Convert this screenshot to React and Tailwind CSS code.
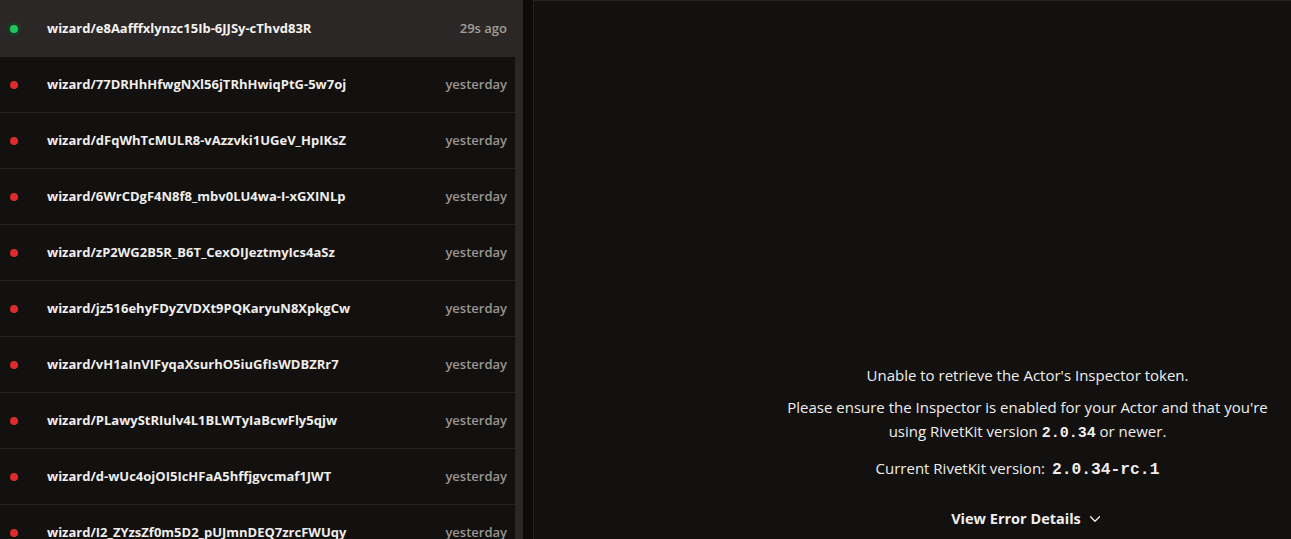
import { ChevronDown } from 'lucide-react'

const actors = [
  ['77DRHhHfwgNXl56jTRhHwiqPtG-5w7oj', 'yesterday'],
  ['dFqWhTcMULR8-vAzzvki1UGeV_HpIKsZ', 'yesterday'],
  ['6WrCDgF4N8f8_mbv0LU4wa-I-xGXINLp', 'yesterday'],
  ['zP2WG2B5R_B6T_CexOIJeztmyIcs4aSz', 'yesterday'],
  ['jz516ehyFDyZVDXt9PQKaryuN8XpkgCw', 'yesterday'],
  ['vH1aInVIFyqaXsurhO5iuGfIsWDBZRr7', 'yesterday'],
  ['PLawyStRIulv4L1BLWTyIaBcwFly5qjw', 'yesterday'],
  ['d-wUc4ojOI5IcHFaA5hffjgvcmaf1JWT', 'yesterday'],
  ['I2_ZYzsZf0m5D2_pUJmnDEQ7zrcFWUqy', 'yesterday'],
]

function ActorRow({ id, time }) {
  return (
    <div className="flex items-center h-[56px] shrink-0 border-b border-[#262321] pt-px">
      <div className="w-[27px] flex justify-center">
        <span className="w-[8px] h-[8px] rounded-full bg-[#dc2b2b]" />
      </div>
      <span className="ml-[20px] flex-1 text-[13px] font-bold text-[#f0eeec] truncate">wizard/{id}</span>
      <span className="mr-[8px] text-[13px] font-semibold text-[#9b9590]">{time}</span>
    </div>
  )
}

export default function App() {
  return (
    <div className="flex h-[539px] w-[1291px] overflow-hidden bg-[#0c0b0a] font-['Open_Sans',sans-serif]">
      <div className="w-[523px] flex flex-col shrink-0">
        {/* current actor */}
        <div className="flex items-center h-[57px] shrink-0 bg-[#2a2726] pt-px">
          <div className="w-[27px] flex justify-center">
            <span className="w-[14px] h-[14px] rounded-full bg-[#1b3a26] flex items-center justify-center">
              <span className="w-[8px] h-[8px] rounded-full bg-[#22c55e]" />
            </span>
          </div>
          <span className="ml-[20px] flex-1 text-[13px] font-bold text-[#f4f2f0]">wizard/e8Aafffxlynzc15Ib-6JJSy-cThvd83R</span>
          <span className="mr-[16px] text-[13px] font-semibold text-[#a39d97]">29s ago</span>
        </div>
        <div className="flex flex-1 min-h-0">
          <div className="flex-1 flex flex-col bg-[#121110] overflow-hidden">
            {actors.map(([id, time]) => (
              <ActorRow key={id} id={id} time={time} />
            ))}
          </div>
          <div className="w-[7px] bg-[#2a2726]" />
          <div className="w-px bg-[#2c2927]" />
        </div>
      </div>
      <div className="w-[10px] shrink-0" />
      <div className="flex-1 bg-[#121110] border-l border-t border-[#262321] flex flex-col items-center pl-[230px] pt-[362px] text-[15px] text-[#f0eeec] text-center">
        <p className="leading-[24px]">Unable to retrieve the Actor's Inspector token.</p>
        <p className="mt-[8px] max-w-[494px] leading-[24px]">
          Please ensure the Inspector is enabled for your Actor and that you're using RivetKit version{' '}
          <code className="font-['Liberation_Mono',monospace] font-bold text-[15px]">2.0.34</code> or newer.
        </p>
        <p className="mt-[10px] pr-[20px] leading-[24px]">
          Current RivetKit version:{' '}
          <code className="ml-[3px] font-['Liberation_Mono',monospace] font-bold text-[16.3px]">2.0.34-rc.1</code>
        </p>
        <button className="mt-[26px] flex items-center gap-[5px] text-[14.5px] font-bold text-[#f0eeec]">
          View Error Details <ChevronDown size={18} strokeWidth={1.75} />
        </button>
      </div>
    </div>
  )
}
